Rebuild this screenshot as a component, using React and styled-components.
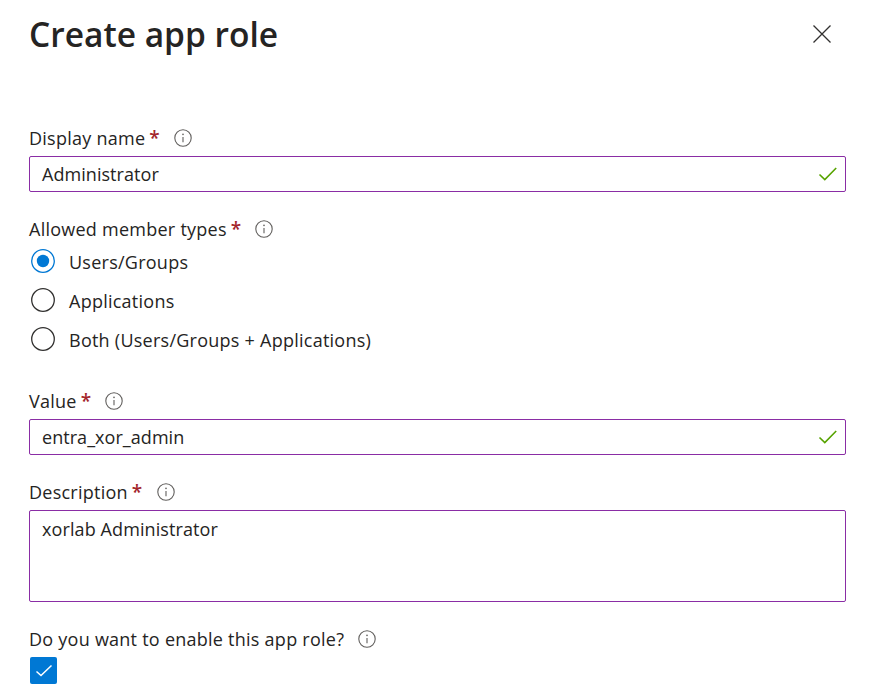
import React from "react";
import styled, { createGlobalStyle } from "styled-components";

const GlobalStyle = createGlobalStyle`
  html, body {
    margin: 0;
    padding: 0;
    background: #fff;
    overflow: hidden;
  }
  body {
    font-family: "Open Sans", "Noto Sans", "Liberation Sans", sans-serif;
    color: #252423;
  }
`;

const Panel = styled.div`
  width: 871px;
  height: 695px;
  box-sizing: border-box;
  padding: 0 25px 0 29px;
  overflow: hidden;
`;

const Header = styled.header`
  display: flex;
  align-items: center;
  justify-content: space-between;
  height: 68px;
  margin-bottom: 58px;
`;

const Title = styled.h1`
  margin: 0;
  font-size: 33.5px;
  line-height: 68px;
  font-weight: 600;
  color: #252423;
`;

const CloseButton = styled.button`
  display: flex;
  padding: 0;
  margin-right: 14px;
  border: 0;
  background: none;
`;

const Field = styled.div`
  margin-bottom: ${(p) => p.$gap || 0}px;
`;

const Label = styled.label`
  display: flex;
  align-items: center;
  height: 24px;
  margin-bottom: ${(p) => (p.$flush ? 0 : 6)}px;
  font-size: 18px;
  line-height: 24px;
  letter-spacing: 0.25px;
  color: #252423;
  white-space: nowrap;
`;

const Star = styled.span`
  color: #a4262c;
  margin-left: 4px;
  font-size: 19px;
  font-weight: 600;
`;

const InfoWrap = styled.span`
  display: inline-flex;
  margin-left: 14px;
`;

const InputBox = styled.div`
  display: flex;
  align-items: center;
  justify-content: space-between;
  box-sizing: border-box;
  height: 36px;
  padding: 0 7px 0 12px;
  border: 1px solid #8a2da5;
  border-radius: 2px;
  font-size: 18px;
  letter-spacing: 0.05px;
  color: #252423;
`;

const TextArea = styled.div`
  box-sizing: border-box;
  height: 92px;
  padding: 5px 12px;
  border: 1px solid #8a2da5;
  border-radius: 2px;
  font-size: 18px;
  line-height: 26px;
  letter-spacing: 0.1px;
  color: #252423;
`;

const RadioList = styled.div`
  display: flex;
  flex-direction: column;
  gap: 15px;
  padding: 8px 0 0 2px;
`;

const RadioRow = styled.div`
  display: flex;
  align-items: center;
  gap: 14px;
  height: 24px;
  font-size: 18px;
  letter-spacing: 0.25px;
`;

const RadioText = styled.span`
  margin-top: 2px;
`;

const CheckBox = styled.span`
  display: flex;
  align-items: center;
  justify-content: center;
  width: 27px;
  height: 27px;
  margin-left: 1px;
  border-radius: 2px;
  background: #0078d4;
`;

const RadioMark = ({ checked }) => (
  <svg width="24" height="24" viewBox="0 0 24 24" fill="none">
    <circle cx="12" cy="12" r="11.3" stroke={checked ? "#0078d4" : "#323130"} strokeWidth="1.3" />
    {checked && <circle cx="12" cy="12" r="6.2" fill="#0078d4" />}
  </svg>
);

const InfoIcon = () => (
  <InfoWrap>
    <svg width="18" height="18" viewBox="0 0 18 18" fill="none">
      <circle cx="9" cy="9" r="8.2" stroke="#605e5c" strokeWidth="1.1" />
      <path d="M9 8v5.2" stroke="#605e5c" strokeWidth="1.1" />
      <circle cx="9" cy="5.4" r="0.8" fill="#605e5c" />
    </svg>
  </InfoWrap>
);

const ValidIcon = () => (
  <svg width="20" height="14" viewBox="0 0 20 14" fill="none">
    <path d="M1.5 7.5L6.8 12.6L18.2 1" stroke="#57a300" strokeWidth="1.6" />
  </svg>
);

const radios = [
  { text: "Users/Groups", checked: true },
  { text: "Applications" },
  { text: "Both (Users/Groups + Applications)" },
];

export default function App() {
  return (
    <>
      <GlobalStyle />
      <Panel>
        <Header>
          <Title>Create app role</Title>
          <CloseButton aria-label="Close">
            <svg width="20" height="20" viewBox="0 0 20 20" fill="none">
              <path d="M1.5 1.5L18.5 18.5M18.5 1.5L1.5 18.5" stroke="#323130" strokeWidth="1.3" />
            </svg>
          </CloseButton>
        </Header>

        <Field $gap={25}>
          <Label>
            Display name<Star>*</Star>
            <InfoIcon />
          </Label>
          <InputBox>
            Administrator
            <ValidIcon />
          </InputBox>
        </Field>

        <Field $gap={38}>
          <Label $flush>
            Allowed member types<Star>*</Star>
            <InfoIcon />
          </Label>
          <RadioList>
            {radios.map((r) => (
              <RadioRow key={r.text}>
                <RadioMark checked={r.checked} />
                <RadioText>{r.text}</RadioText>
              </RadioRow>
            ))}
          </RadioList>
        </Field>

        <Field $gap={25}>
          <Label>
            Value<Star>*</Star>
            <InfoIcon />
          </Label>
          <InputBox>
            entra_xor_admin
            <ValidIcon />
          </InputBox>
        </Field>

        <Field $gap={25}>
          <Label>
            Description<Star>*</Star>
            <InfoIcon />
          </Label>
          <TextArea>xorlab Administrator</TextArea>
        </Field>

        <Field>
          <Label>
            Do you want to enable this app role?
            <InfoIcon />
          </Label>
          <CheckBox>
            <svg width="18" height="14" viewBox="0 0 18 14" fill="none">
              <path d="M1.5 7.5L6 11.5L16.5 1.5" stroke="#fff" strokeWidth="1.5" />
            </svg>
          </CheckBox>
        </Field>
      </Panel>
    </>
  );
}
